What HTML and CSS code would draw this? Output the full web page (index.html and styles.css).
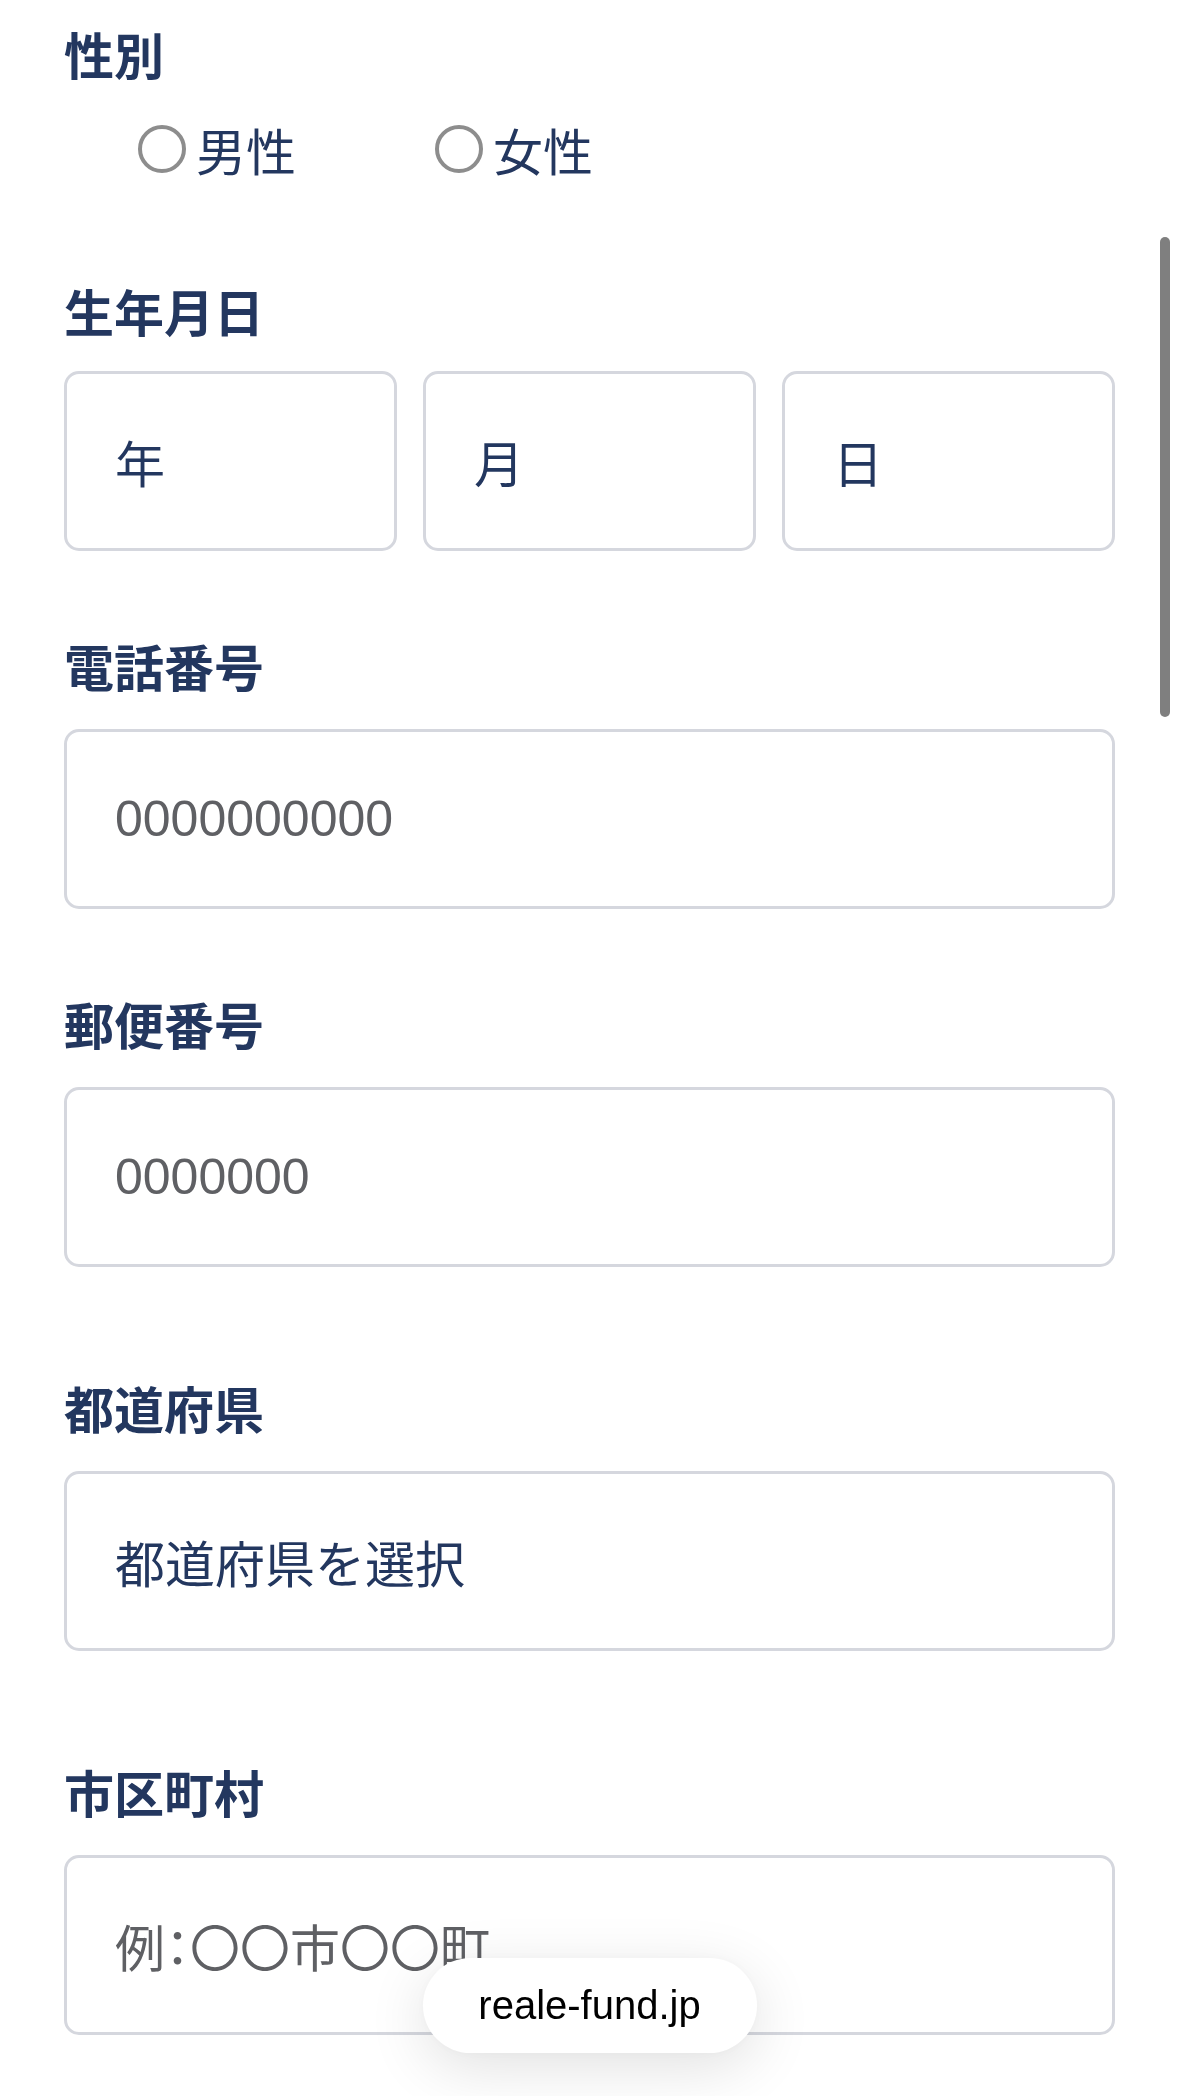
FILE: index.html
```html
<!DOCTYPE html>
<html lang="ja">
<head>
<meta charset="utf-8">
<title>会員登録</title>
<link rel="stylesheet" href="styles.css">
</head>
<body>
<main class="form">
  <section class="field field-gender">
    <div class="label">性別</div>
    <div class="radios">
      <div class="radio"><span class="circle"></span><span class="radio-text">男性</span></div>
      <div class="radio"><span class="circle"></span><span class="radio-text">女性</span></div>
    </div>
  </section>

  <section class="field field-sm">
    <div class="label label-date">生年月日</div>
    <div class="date-row">
      <div class="box"><span class="value">年</span></div>
      <div class="box"><span class="value">月</span></div>
      <div class="box"><span class="value">日</span></div>
    </div>
  </section>

  <section class="field field-sm">
    <div class="label">電話番号</div>
    <div class="box"><span class="ph ph-num">0000000000</span></div>
  </section>

  <section class="field field-lg">
    <div class="label">郵便番号</div>
    <div class="box"><span class="ph ph-num">0000000</span></div>
  </section>

  <section class="field field-lg">
    <div class="label">都道府県</div>
    <div class="box"><span class="value">都道府県を選択</span></div>
  </section>

  <section class="field">
    <div class="label">市区町村</div>
    <div class="box"><span class="ph">例<span class="colon">：</span>〇〇市〇〇町</span></div>
  </section>
</main>

<div class="scrollbar"></div>
<div class="urlbar">reale-fund.jp</div>
</body>
</html>
```
FILE: styles.css
```css
html, body {
  margin: 0;
  padding: 0;
  background: #ffffff;
}

body {
  font-family: "Noto Sans CJK JP", sans-serif;
  color: #23375f;
  overflow: hidden;
  height: 2096px;
}

.form {
  display: flex;
  flex-direction: column;
  padding: 28px 64px 0 64px;
}

.label {
  font-size: 50px;
  line-height: 50px;
  height: 50px;
  font-weight: 700;
  margin-bottom: 39px;
  white-space: nowrap;
}

.label-date {
  margin-bottom: 36px;
}

.field-gender {
  margin-bottom: 111px;
}

.field-gender .label {
  margin-bottom: 46px;
}

.field-sm {
  margin-bottom: 89px;
}

.field-lg {
  margin-bottom: 115px;
}

.radios {
  display: flex;
  align-items: center;
  gap: 139px;
  padding-left: 74px;
  height: 50px;
}

.radio {
  display: flex;
  align-items: center;
  gap: 10px;
}

.circle {
  width: 48px;
  height: 48px;
  box-sizing: border-box;
  border: 4.5px solid #8d8d8d;
  border-radius: 50%;
  background: #ffffff;
}

.radio-text {
  font-size: 50px;
  line-height: 50px;
  color: #23375f;
}

.date-row {
  display: grid;
  grid-template-columns: 1fr 1fr 1fr;
  gap: 26px;
}

.box {
  box-sizing: border-box;
  height: 180px;
  border: 3px solid #d5d7de;
  border-radius: 15px;
  background: #ffffff;
  display: flex;
  align-items: center;
  padding: 0 48px;
}

.value {
  font-size: 50px;
  line-height: 50px;
  color: #23375f;
  white-space: nowrap;
}

.ph {
  font-size: 50px;
  line-height: 50px;
  color: #5f6064;
  white-space: nowrap;
}

.ph-num {
  font-family: "Liberation Sans", "Noto Sans CJK JP", sans-serif;
}

.colon {
  font-feature-settings: "palt";
}

.scrollbar {
  position: fixed;
  top: 237px;
  right: 9px;
  width: 10px;
  height: 480px;
  border-radius: 5px;
  background: #7f7f7f;
}

.urlbar {
  position: fixed;
  left: 50%;
  bottom: 43px;
  width: 334px;
  height: 95px;
  margin-left: -167px;
  border-radius: 48px;
  background: #ffffff;
  box-shadow: 0 14px 60px rgba(0, 0, 0, 0.12), 0 0 14px rgba(0, 0, 0, 0.03);
  display: flex;
  align-items: center;
  justify-content: center;
  font-family: "Liberation Sans", Arial, sans-serif;
  font-size: 40px;
  color: #000000;
}
```
